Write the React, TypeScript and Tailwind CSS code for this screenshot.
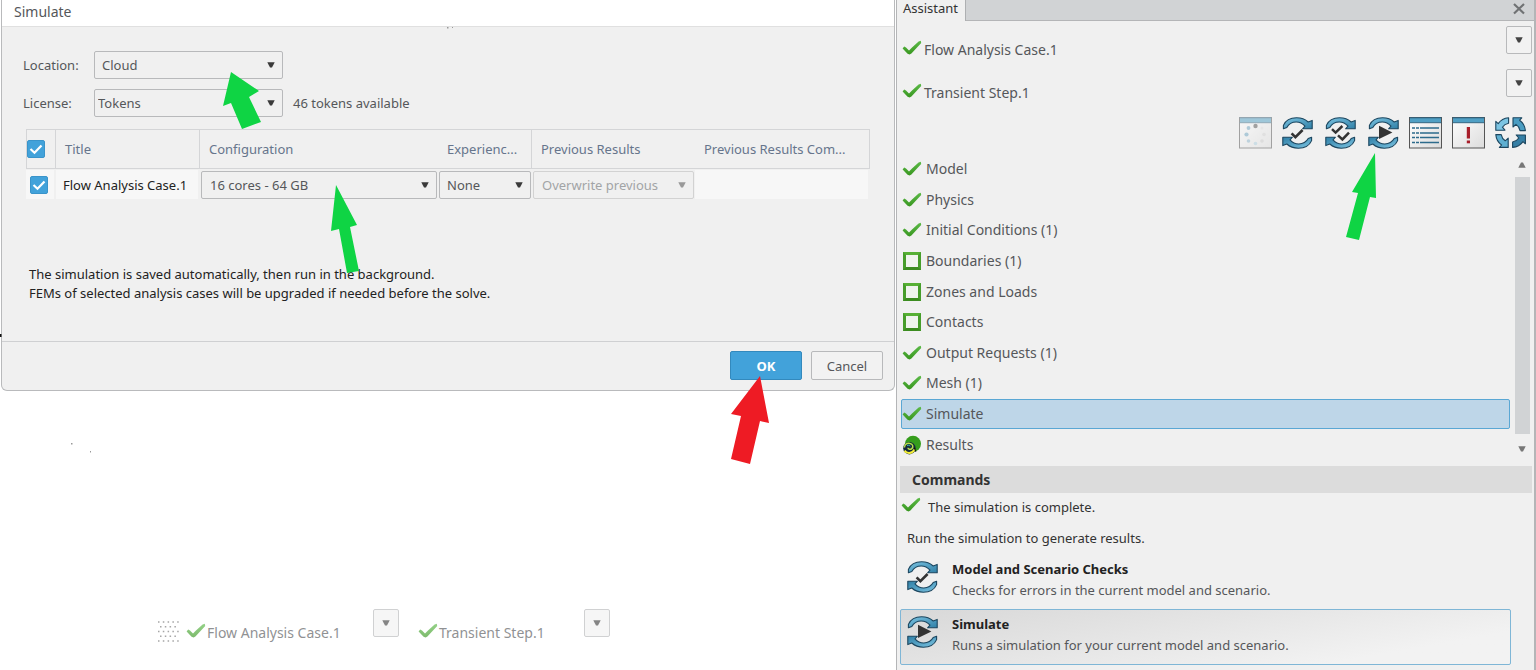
import React from "react";

const FONT = "font-['Noto_Sans','Open_Sans',sans-serif]";

function Caret({ className = "" }: { className?: string }) {
  return (
    <svg viewBox="0 0 8 6" className={`h-1.5 w-2 ${className}`} aria-hidden="true">
      <path d="M.3 .3H7.700L5 5.500H3Z" fill="currentColor" />
    </svg>
  );
}

function Check({ className = "" }: { className?: string }) {
  return (
    <svg viewBox="0 0 20 16" className={`h-4 w-5 shrink-0 ${className}`} aria-hidden="true">
      <defs>
        <linearGradient id="tick" x1="0" y1="0" x2="0" y2="1">
          <stop offset="0" stopColor="#5cba48" />
          <stop offset="1" stopColor="#38961f" />
        </linearGradient>
      </defs>
      <path d="M.6 8.4 2.2 6.6 4 7.4 7 10.4 10 7.6 16.6 1.4 18.8 .8 19.2 3 9.4 13.4 7.6 14.6 5.6 13.8Z" fill="url(#tick)" />
    </svg>
  );
}

function EmptyBox() {
  return (
    <span className="flex w-5 shrink-0 justify-center">
      <span className="size-[18px] border-3 border-t-[#57b035] border-r-[#479d2b] border-b-[#3c8c20] border-l-[#479d2b] bg-[#f0f4ee]" />
    </span>
  );
}

function ResultsIcon() {
  return (
    <svg viewBox="0 0 20 20" className="size-5 shrink-0" aria-hidden="true">
      <circle cx="11" cy="8.8" r="8" fill="#359d1c" />
      <circle cx="7.4" cy="13.2" r="6.2" fill="#142a3d" />
      <path d="M2.4 12.5C2.6 9 5.4 7.8 8 8.4c3 .6 3.6 3.6 1.8 5.2-1.4 1.2-3.8.8-3.8-.8" fill="none" stroke="#b8e04a" strokeWidth="1.5" />
      <path d="M2.6 15.6c2 3.2 7.4 3.6 10.2-1.4" fill="none" stroke="#f4ee3a" strokeWidth="2" />
      <path d="M5 10.6c1.4-.8 3.2-.4 3.2.8" fill="none" stroke="#2fb8b0" strokeWidth="1" />
      <path d="M12.4 12.6l1.4 4" stroke="#111" strokeWidth="1.2" />
    </svg>
  );
}

function Cycle({ kind, className = "" }: { kind: "check" | "double" | "play"; className?: string }) {
  const arrow =
    "M1.400 11.800V8.400C3.600 3.400 8.600 .8 14.600 .8c4.600 0 8.400 1.300 11.600 4.200L30.200 3.400V11.800H20.600L23 9.200C20.400 6.200 17.600 5 14.200 5 9.800 5 6.600 7.200 4.800 10.400Z";
  return (
    <svg viewBox="0 0 32 32" className={`size-8 shrink-0 ${className}`} aria-hidden="true">
      <defs>
        <linearGradient id="cyc" x1="0" y1="0" x2="1" y2="1">
          <stop offset="0" stopColor="#7cc4e2" />
          <stop offset="1" stopColor="#2f7fa6" />
        </linearGradient>
      </defs>
      <g fill="url(#cyc)" stroke="#1c465f" strokeWidth="1.1" strokeLinejoin="round">
        <path d={arrow} />
        <path d={arrow} transform="rotate(180 15.500 16)" />
      </g>
      {kind === "check" && <path d="M9.600 16.400 13.400 20.200 20.600 13" fill="none" stroke="#333" strokeWidth="2.6" />}
      {kind === "double" && (
        <path d="M7 12.200 10.600 15.600 17.400 9M13 18.400 17.400 22.400 24 15.600" fill="none" stroke="#333" strokeWidth="2.500" />
      )}
      {kind === "play" && <path d="M11 8.800 24.400 15.600 11 22Z" fill="#333" />}
    </svg>
  );
}

function WindowIcon({ kind }: { kind: "spinner" | "list" | "alert" }) {
  return (
    <svg viewBox="0 0 34 32" className={kind === "spinner" ? "h-8 w-[34px] opacity-50" : "h-8 w-[34px]"} aria-hidden="true">
      <defs>
        <linearGradient id="win" x1="0" y1="0" x2="1" y2="1">
          <stop offset="0" stopColor="#ffffff" />
          <stop offset="1" stopColor="#dcdcdc" />
        </linearGradient>
      </defs>
      <rect x=".5" y=".5" width="32" height="30.500" fill="url(#win)" stroke="#555" />
      <rect x="1" y="1" width="31" height="4.500" fill="#4f9fc4" />
      <path d="M.5 .8H32.500M.5 5.700H32.500" stroke="#2d6380" />
      {kind === "list" && (
        <g stroke="#2d6b8c" strokeWidth="1.700">
          <path d="M3 11H30M3 16H30M3 20.500H30M3 25.500H30" strokeDasharray="3 1 3 1 19 0" />
        </g>
      )}
      {kind === "alert" && (
        <g fill="#a81f2b">
          <rect x="14.800" y="10" width="3.200" height="11.500" />
          <rect x="14.800" y="23.500" width="3.200" height="2.800" />
        </g>
      )}
      {kind === "spinner" && (
        <g>
          <circle cx="16.500" cy="9" r="2.200" fill="#555" />
          <circle cx="9.500" cy="11" r="1.900" fill="#6fa6c2" />
          <circle cx="7.500" cy="17.500" r="2.100" fill="#6fa6c2" />
          <circle cx="9.500" cy="24" r="1.800" fill="#8db6cb" />
          <circle cx="16.500" cy="26.500" r="1.800" fill="#a9cddd" />
          <circle cx="23" cy="24" r="1.800" fill="#c9c9c9" />
          <circle cx="25" cy="17.500" r="1.800" fill="#d2d2d2" />
          <circle cx="23" cy="11" r="1.500" fill="#dedede" />
        </g>
      )}
    </svg>
  );
}

function UpdateIcon() {
  const quarter = "M13.600 .8V6.200C11 6.700 8.800 8 7.400 10.200L10 13.200H.8V4.400L3.200 6.600C5.600 3.200 9.200 1.200 13.600 .8Z";
  return (
    <svg viewBox="0 0 32 32" className="size-8" aria-hidden="true">
      <g stroke="#1c465f" strokeWidth="1.1" strokeLinejoin="round">
        <path d={quarter} fill="#7cc4e2" />
        <path d={quarter} transform="rotate(90 15.600 15.600)" fill="#4b9dc2" />
        <path d={quarter} transform="rotate(180 15.600 15.600)" fill="#357fa5" />
        <path d={quarter} transform="rotate(270 15.600 15.600)" fill="#5fb0d2" />
      </g>
    </svg>
  );
}

type PickProps = { id: string; label?: string; value: string; wrap: string; pad: string; disabled?: boolean };

function Pick({ id, label, value, wrap, pad, disabled }: PickProps) {
  return (
    <div className={`relative h-7 ${wrap}`}>
      <select
        id={id}
        aria-label={label}
        disabled={disabled}
        className={`block h-full w-full appearance-none rounded-xs border bg-[#f0f0f0] ${pad} ${
          disabled ? "border-[#d2d2d2] text-[#a2a4a6]" : "border-[#b8b9bb] text-[#55575a]"
        }`}
      >
        <option>{value}</option>
      </select>
      <Caret className={`pointer-events-none absolute top-[11px] right-2 ${disabled ? "text-[#999]" : "text-[#3a3a3a]"}`} />
    </div>
  );
}

function Tick({ label }: { label: string }) {
  return (
    <span className="relative block size-[18px]">
      <input
        type="checkbox"
        defaultChecked
        aria-label={label}
        className="peer block size-[18px] appearance-none rounded-xs border border-[#3a94ca] bg-white checked:bg-[#42a2da]"
      />
      <svg viewBox="0 0 18 18" className="pointer-events-none absolute inset-0 size-[18px] opacity-0 peer-checked:opacity-100" aria-hidden="true">
        <path d="M3.500 9 7.500 12.800 14.500 5.500" fill="none" stroke="#fff" strokeWidth="2.200" />
      </svg>
    </span>
  );
}

function MoreButton({ label }: { label: string }) {
  return (
    <button aria-label={label} className="flex h-7 w-[26px] items-center justify-center rounded-xs border border-[#b8b9bb] bg-[#f2f2f2] text-[#444]">
      <Caret />
    </button>
  );
}

function SimulateDialog() {
  return (
    <section role="dialog" aria-labelledby="dlg-title" className="mr-px ml-px rounded-b-md border border-t-0 border-[#b9babc] bg-[#f0f0f0] text-[13px]">
      <h1 id="dlg-title" className="h-[27px] border-b border-[#e0e0e0] bg-white pl-3 text-[14px] leading-6 text-[#55575a]">
        Simulate
      </h1>
      <div className="pt-6 pr-6 pl-[21px]">
        <div className="flex flex-col gap-2.5 text-[#55575a]">
          <div className="flex items-center">
            <label htmlFor="location" className="w-[71px]">Location:</label>
            <Pick id="location" value="Cloud" wrap="w-[189px]" pad="pl-[7px]" />
          </div>
          <div className="flex items-center">
            <label htmlFor="license" className="w-[71px]">License:</label>
            <Pick id="license" value="Tokens" wrap="w-[189px]" pad="pl-[3px]" />
            <span className="ml-2.5">46 tokens available</span>
          </div>
        </div>
        <div className="ml-[3px] pt-3">
          <table className="w-full table-fixed border-separate border-spacing-0 text-left">
            <colgroup>
              <col className="w-[30px]" />
              <col className="w-[144px]" />
              <col className="w-[238px]" />
              <col className="w-[94px]" />
              <col className="w-[163px]" />
              <col />
            </colgroup>
            <thead className="text-[#66758c]">
              <tr className="h-10 *:border-y *:border-[#d4d5d7] *:p-0 *:font-normal">
                <th className="border-x">
                  <Tick label="Select all analysis cases" />
                </th>
                <th className="border-r"><span className="pl-[9px]">Title</span></th>
                <th><span className="pl-[9px]">Configuration</span></th>
                <th className="border-r"><span className="pl-[9px]">Experienc...</span></th>
                <th><span className="pl-[9px]">Previous Results</span></th>
                <th className="border-r"><span className="pl-[9px]">Previous Results Com...</span></th>
              </tr>
            </thead>
            <tbody>
              <tr className="*:p-0 *:pt-px">
                <td>
                  <div className="mr-0.5 flex h-[29px] items-center justify-end bg-[#f7f7f7] pr-1.5 pl-1">
                    <Tick label="Select Flow Analysis Case.1" />
                  </div>
                </td>
                <td>
                  <div className="mr-0.5 flex h-[29px] items-center bg-[#f7f7f7] pl-[7px] whitespace-nowrap text-[#222]">Flow Analysis Case.1</div>
                </td>
                <td><Pick id="config" label="Configuration" value="16 cores - 64 GB" wrap="ml-px mr-px" pad="pl-2" /></td>
                <td><Pick id="exp" label="Experience" value="None" wrap="ml-px mr-px" pad="pl-[7px]" /></td>
                <td><Pick id="prev" label="Previous results" value="Overwrite previous" wrap="ml-px mr-px" pad="pl-2" disabled /></td>
                <td><div className="mr-0.5 h-[29px] bg-[#f7f7f7]" /></td>
              </tr>
            </tbody>
          </table>
        </div>
        <p className="mt-[66px] mb-[38px] pl-1.5 leading-[19px] text-[#222]">
          The simulation is saved automatically, then run in the background.
          <br />
          FEMs of selected analysis cases will be upgraded if needed before the solve.
        </p>
      </div>
      <footer className="flex justify-end gap-[9px] border-t border-[#cfd0d2] pt-[9px] pr-[11px] pb-2.5">
        <button className="h-[29px] w-[72px] rounded-xs border border-[#3389bd] bg-[#42a2da] font-bold text-white">OK</button>
        <button className="h-[29px] w-[72px] rounded-xs border border-[#b8b9bb] bg-[#f2f2f2] text-[#55575a]">Cancel</button>
      </footer>
    </section>
  );
}

function Callouts() {
  return (
    <svg className="pointer-events-none absolute top-0 left-0 h-[480px] w-[897px]" viewBox="0 0 897 480" aria-hidden="true">
      <g fill="#0fd444">
        <path d="M231 72 259 91 249 97 261 122 242 129 231 103 223 106Z" />
        <path d="M336 185 357 225 350 227 359 271 347 273 339 229 331 231Z" />
      </g>
      <path d="M760 376 769 423 760 421 750 464 731 459 741 416 731 414Z" fill="#ee1b24" />
      <path d="M447 27h1.500v1.500h-1.500ZM452 27h1v1h-1ZM71 443h1.500v1.500h-1.500ZM90 451h1v1.500h-1Z" fill="#999" />
      <path d="M0 334h1.500v3H0Z" fill="#111" />
    </svg>
  );
}

function StepBar() {
  return (
    <nav className="mt-[218px] flex items-start pl-[157px] text-[#55575a] opacity-65">
      <svg viewBox="0 0 23 22" className="mt-3 h-[22px] w-[23px]" aria-hidden="true">
        <g stroke="#777" strokeWidth="1.500" strokeDasharray="1.500 3.300">
          <path d="M1 1H23M3 5.700H21M1 10.400H23M3 15.200H21M1 20H23" />
        </g>
      </svg>
      <div className="ml-1.5 flex w-[187px] items-start pt-3.5">
        <Check />
        <span className="pl-px leading-5">Flow Analysis Case.1</span>
      </div>
      <MoreButton label="Analysis case options" />
      <div className="ml-[19px] flex w-[166px] items-start pt-3.5">
        <Check />
        <span className="pl-px leading-5">Transient Step.1</span>
      </div>
      <MoreButton label="Step options" />
    </nav>
  );
}

const steps = [
  { name: "Model", state: "done" },
  { name: "Physics", state: "done" },
  { name: "Initial Conditions (1)", state: "done" },
  { name: "Boundaries (1)", state: "open" },
  { name: "Zones and Loads", state: "open" },
  { name: "Contacts", state: "open" },
  { name: "Output Requests (1)", state: "done" },
  { name: "Mesh (1)", state: "done" },
  { name: "Simulate", state: "current" },
  { name: "Results", state: "results" },
];

function Assistant() {
  return (
    <aside className="flex min-h-screen flex-col border-r-2 border-l border-[#b4b5b7] bg-[#f0f0f0] text-[#55575a]">
      <header className="flex h-[21px]">
        <h2 className="w-[69px] border-r border-[#aeb0b2] pl-1.5 text-[13px] leading-4 text-[#333]">Assistant</h2>
        <div className="flex flex-1 justify-end border-b border-[#b4b5b7] bg-[#d1d3d5] pr-2">
          <button aria-label="Close" className="h-4 w-3.5">
            <svg viewBox="0 0 14 14" className="mt-px size-3.5" aria-hidden="true">
              <path d="M2 2 12 11.500M12 2 2 11.500" stroke="#707274" strokeWidth="2.200" />
            </svg>
          </button>
        </div>
      </header>

      <div className="flex flex-col gap-[9px] pt-[5px] pr-0.5 pl-[5px]">
        <div className="flex items-start">
          <Check className="mt-3.5" />
          <span className="flex-1 pt-3.5 pl-0.5 leading-5">Flow Analysis Case.1</span>
          <MoreButton label="Analysis case menu" />
        </div>
        <div className="flex items-start">
          <Check className="mt-3.5" />
          <span className="flex-1 pt-3.5 pl-0.5 leading-5">Transient Step.1</span>
          <MoreButton label="Step menu" />
        </div>
      </div>

      <div className="flex justify-end gap-[9px] pt-3.5 pr-[7px]">
        <button aria-label="Status" disabled><WindowIcon kind="spinner" /></button>
        <button aria-label="Check"><Cycle kind="check" /></button>
        <button aria-label="Check all" className="ml-0.5"><Cycle kind="double" /></button>
        <button aria-label="Simulate" className="relative ml-0.5">
          <Cycle kind="play" />
          <svg viewBox="0 0 32 88" className="pointer-events-none absolute top-9 left-[-24px] h-[88px] w-8" aria-hidden="true">
            <path d="M31 0 32 45 26 44 15 87 2 84 14 40 8 39Z" fill="#0fd444" />
          </svg>
        </button>
        <button aria-label="List"><WindowIcon kind="list" /></button>
        <button aria-label="Errors"><WindowIcon kind="alert" /></button>
        <button aria-label="Update"><UpdateIcon /></button>
      </div>

      <div className="flex h-[312px] pt-[5px] pr-1 pb-px pl-1">
        <ul className="flex flex-1 flex-col">
          {steps.map((s) => (
            <li
              key={s.name}
              className={
                s.state === "current"
                  ? "flex flex-1 items-center rounded-xs border border-[#5aa7d4] bg-[#bed6e8]"
                  : "flex flex-1 items-center border border-transparent"
              }
            >
              {s.state === "open" ? <EmptyBox /> : s.state === "results" ? <ResultsIcon /> : <Check />}
              <span className="pl-1">{s.name}</span>
            </li>
          ))}
        </ul>
        <div className="ml-1 flex w-4 flex-col items-center pt-2 pb-2" role="presentation">
          <Caret className="rotate-180 text-[#777]" />
          <div className="mt-[9px] mb-3 w-[15px] flex-1 bg-[#d1d3d5]" />
          <Caret className="text-[#777]" />
        </div>
      </div>

      <h3 className="mt-[5px] mr-0.5 ml-[3px] bg-[#dcdcdc] pl-3 leading-[27px] font-bold text-[#333]">Commands</h3>
      <div className="flex items-start pt-1 pl-1 text-[13px] text-[#333]">
        <Check />
        <p className="pl-[7px] leading-5">The simulation is complete.</p>
      </div>
      <p className="pt-[11px] pl-2.5 text-[13px] leading-5 text-[#333]">Run the simulation to generate results.</p>
      <div className="mt-1.5 mr-[23px] ml-[3px] flex flex-col text-[13px]">
        <button className="flex h-[55px] items-start gap-[13px] border border-transparent px-1.5 pt-1 text-left">
          <Cycle kind="check" className="mt-0.5" />
          <span className="flex flex-col leading-[21px]">
            <b className="text-[#222]">Model and Scenario Checks</b>
            <span>Checks for errors in the current model and scenario.</span>
          </span>
        </button>
        <button className="flex h-14 items-start gap-[13px] rounded-xs border border-[#7fb6d6] bg-linear-170 from-[#d8d8d8] to-[#f2f2f2] to-80% px-1.5 pt-1 text-left">
          <Cycle kind="play" className="mt-0.5" />
          <span className="flex flex-col leading-[21px]">
            <b className="text-[#222]">Simulate</b>
            <span>Runs a simulation for your current model and scenario.</span>
          </span>
        </button>
      </div>
    </aside>
  );
}

export default function App() {
  return (
    <div className={`grid min-h-screen grid-cols-[896fr_640fr] bg-white text-[14px] leading-5 ${FONT}`}>
      <main className="relative min-w-0">
        <SimulateDialog />
        <StepBar />
        <Callouts />
      </main>
      <Assistant />
    </div>
  );
}
